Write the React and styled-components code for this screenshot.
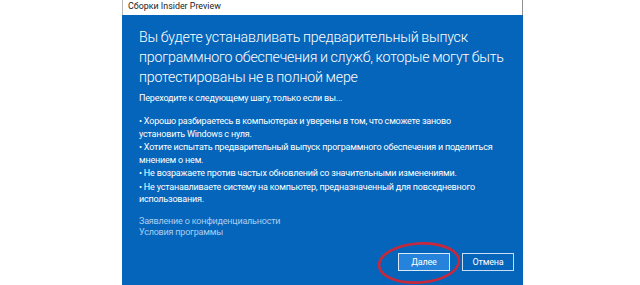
import React from "react"
import styled, { createGlobalStyle } from "styled-components"

const GlobalStyle = createGlobalStyle`
  html, body {
    margin: 0;
    padding: 0;
    background: #fff;
    overflow: hidden;
  }
  body {
    font-family: Roboto, "Noto Sans", "Liberation Sans", sans-serif;
  }
`

const bullets = [
  "• Хорошо разбираетесь в компьютерах и уверены в том, что сможете заново установить Windows с нуля.",
  "• Хотите испытать предварительный выпуск программного обеспечения и поделиться мнением о нем.",
  "• Не возражаете против частых обновлений со значительными изменениями.",
  "• Не устанавливаете систему на компьютер, предназначенный для повседневного использования.",
]

const App = () => {
  return (
    <>
      <GlobalStyle />
      <Page>
        <Window>
          <TitleBar>Сборки Insider Preview</TitleBar>
          <Panel>
            <Heading>
              Вы будете устанавливать предварительный выпуск программного
              обеспечения и служб, которые могут быть протестированы не в
              полной мере
            </Heading>
            <Lead>Переходите к следующему шагу, только если вы...</Lead>
            <List>
              {bullets.map(b => (
                <Item key={b}>{b}</Item>
              ))}
            </List>
            <Links>
              <Link>Заявление о конфиденциальности</Link>
              <Link>Условия программы</Link>
            </Links>
            <Buttons>
              <ButtonWrap>
                <Button primary>Далее</Button>
                <Circle viewBox="0 0 84 44">
                  <ellipse
                    cx="42"
                    cy="22"
                    rx="40"
                    ry="19.5"
                    fill="none"
                    stroke="#c8283c"
                    strokeWidth="2.6"
                    transform="rotate(-4 42 22)"
                  />
                </Circle>
              </ButtonWrap>
              <Button>Отмена</Button>
            </Buttons>
          </Panel>
        </Window>
      </Page>
    </>
  )
}

const Page = styled.div`
  width: 640px;
  height: 285px;
  overflow: hidden;
`

const Window = styled.div`
  margin-left: 122px;
  width: 401px;
  height: 285px;
  display: flex;
  flex-direction: column;
`

const TitleBar = styled.div`
  height: 15px;
  box-sizing: border-box;
  border-left: 1px solid #b9b9b9;
  border-right: 1px solid #8f8f8f;
  padding: 1px 0 0 5px;
  font-size: 8.9px;
  line-height: 11px;
  color: #222;
`

const Panel = styled.div`
  flex: 1;
  background: #0565ba;
  color: #fff;
  padding: 13px 9px 0 17px;
  display: flex;
  flex-direction: column;
  overflow: hidden;
`

const Heading = styled.h1`
  margin: 0;
  font-size: 14.2px;
  line-height: 19.8px;
  font-weight: 300;
  letter-spacing: -0.2px;
  word-spacing: -0.5px;
  max-width: 373px;
`

const Lead = styled.p`
  margin: 5px 0 0;
  font-size: 9px;
  line-height: 12px;
  letter-spacing: -0.2px;
`

const List = styled.div`
  margin-top: 11px;
  display: flex;
  flex-direction: column;
  gap: 1px;
  max-width: 358px;
`

const Item = styled.div`
  font-size: 9px;
  line-height: 12.5px;
  letter-spacing: -0.2px;
`

const Links = styled.div`
  margin-top: 10px;
  display: flex;
  flex-direction: column;
`

const Link = styled.span`
  font-size: 9px;
  line-height: 11.5px;
  color: #a9cdf0;
  letter-spacing: -0.2px;
`

const Buttons = styled.div`
  margin-top: 14px;
  display: flex;
  justify-content: flex-end;
  gap: 12px;
`

const ButtonWrap = styled.div`
  position: relative;
  display: flex;
`

const Button = styled.button`
  width: 52px;
  height: 18px;
  padding: 0;
  box-sizing: border-box;
  border: 1.5px solid ${p => (p.primary ? "#dbe9f7" : "#c9dcf1")};
  background: ${p => (p.primary ? "#2683dc" : "transparent")};
  color: #fff;
  font-family: inherit;
  font-size: 9px;
  line-height: 14px;
  letter-spacing: -0.2px;
`

const Circle = styled.svg`
  position: absolute;
  left: -21px;
  top: -12px;
  width: 84px;
  height: 44px;
  pointer-events: none;
  overflow: visible;
`

export default App
